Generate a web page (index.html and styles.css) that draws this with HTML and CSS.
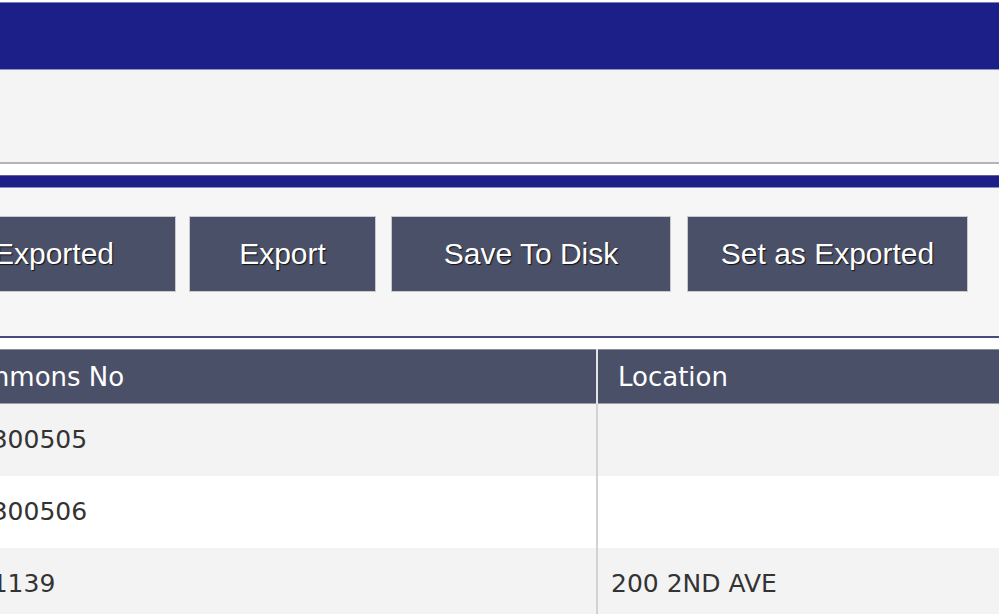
FILE: index.html
```html
<!DOCTYPE html>
<html>
<head>
<meta charset="utf-8">
<link rel="stylesheet" href="styles.css">
</head>
<body>
<div class="page">
  <div class="topbar"></div>
  <div class="panel"></div>
  <div class="spacer"></div>
  <div class="bluebar"></div>
  <div class="toolbar">
    <div class="btn-row">
      <button class="btn btn-1">Not Exported</button>
      <button class="btn btn-2">Export</button>
      <button class="btn btn-3">Save To Disk</button>
      <button class="btn btn-4">Set as Exported</button>
    </div>
  </div>
  <div class="table-wrap">
    <table class="grid">
      <colgroup><col class="c1"><col class="c2"></colgroup>
      <thead>
        <tr><th>Summons No</th><th>Location</th></tr>
      </thead>
      <tbody>
        <tr class="odd"><td>418300505</td><td></td></tr>
        <tr class="even"><td>418300506</td><td></td></tr>
        <tr class="odd"><td>4181139</td><td>200 2ND AVE</td></tr>
      </tbody>
    </table>
  </div>
</div>
</body>
</html>
```
FILE: styles.css
```css
html, body {
  margin: 0;
  padding: 0;
  background: #ffffff;
}
.page {
  width: 999px;
  height: 614px;
  overflow: hidden;
  padding-top: 2px;
  box-sizing: border-box;
}
.topbar {
  height: 68px;
  background: #1c1f87;
  border-top: 1px solid #7a7dbd;
  border-bottom: 1px solid #8f92c8;
  box-sizing: border-box;
}
.panel {
  height: 92px;
  background: #f4f4f4;
  border-bottom: 2px solid #b4b4b4;
}
.spacer {
  height: 11px;
  background: #ffffff;
}
.bluebar {
  height: 13px;
  background: #1c1f87;
  border-top: 1px solid #5b5ea8;
  border-bottom: 1px solid #8a8cc4;
  box-sizing: border-box;
}
.toolbar {
  height: 150px;
  background: #f6f6f6;
  border-bottom: 2px solid #484a7c;
  box-sizing: border-box;
  padding-top: 28px;
  overflow: hidden;
}
.btn-row {
  display: flex;
  margin-left: -123px;
}
.btn {
  height: 76px;
  background: #4a5068;
  border: 1px solid #c9c9cc;
  color: #ffffff;
  font-family: "Liberation Sans", Arial, sans-serif;
  font-size: 30px;
  text-shadow: 1px 1px 1px #101218;
  padding: 0;
  margin: 0;
  flex: none;
}
.btn-1 { width: 299px; margin-right: 13px; }
.btn-2 { width: 187px; margin-right: 15px; }
.btn-3 { width: 280px; margin-right: 16px; }
.btn-4 { width: 281px; }
.table-wrap {
  padding-top: 11px;
  overflow: hidden;
}
.grid {
  margin-left: -69px;
  width: 1068px;
  border-collapse: collapse;
  table-layout: fixed;
  font-family: "DejaVu Sans", sans-serif;
}
.c1 { width: 666px; }
.grid th {
  height: 54px;
  background: #4a5068;
  color: #ffffff;
  font-size: 26px;
  font-weight: normal;
  text-align: left;
  padding: 0 0 0 20px;
  border-top: 1px solid #8a8d99;
  border-bottom: 1px solid #9a9caa;
  box-sizing: border-box;
}
.grid th:first-child {
  border-right: 2px solid #e4e4e8;
}
.grid td {
  height: 72px;
  font-size: 25px;
  color: #333333;
  padding: 0 0 0 13px;
  box-sizing: border-box;
}
.grid td:first-child {
  border-right: 2px solid #d2d2d2;
}
.grid tr.odd td { background: #f3f3f3; }
.grid tr.even td { background: #ffffff; }
```
